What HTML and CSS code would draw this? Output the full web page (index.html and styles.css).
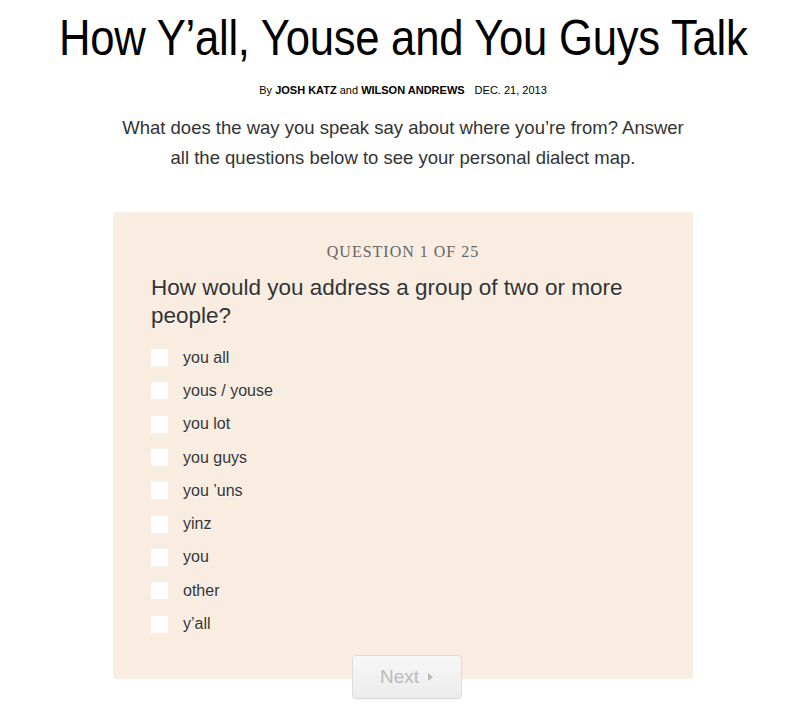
FILE: index.html
```html
<!DOCTYPE html>
<html>
<head>
<meta charset="utf-8">
<link rel="stylesheet" href="styles.css">
</head>
<body>
<header class="head">
  <h1 class="title"><span class="title-in">How Y’all, Youse and You Guys Talk</span></h1>
  <p class="byline">By <b>JOSH KATZ</b> and <b>WILSON ANDREWS</b><span class="date">DEC. 21, 2013</span></p>
  <p class="intro">What does the way you speak say about where you’re from? Answer all the questions below to see your personal dialect map.</p>
</header>
<main class="quiz">
  <div class="qnum">QUESTION 1 OF 25</div>
  <div class="qtext">How would you address a group of two or more people?</div>
  <ul class="opts">
    <li class="opt"><span class="box"></span><span class="lbl">you all</span></li>
    <li class="opt"><span class="box"></span><span class="lbl">yous / youse</span></li>
    <li class="opt"><span class="box"></span><span class="lbl">you lot</span></li>
    <li class="opt"><span class="box"></span><span class="lbl">you guys</span></li>
    <li class="opt"><span class="box"></span><span class="lbl">you ’uns</span></li>
    <li class="opt"><span class="box"></span><span class="lbl">yinz</span></li>
    <li class="opt"><span class="box"></span><span class="lbl">you</span></li>
    <li class="opt"><span class="box"></span><span class="lbl">other</span></li>
    <li class="opt"><span class="box"></span><span class="lbl">y’all</span></li>
  </ul>
</main>
<div class="nav">
  <button class="next">Next <svg width="7" height="10" viewBox="0 0 7 10"><path d="M1 1 L6 5 L1 9 Z" fill="#bbb"/></svg></button>
</div>
</body>
</html>
```
FILE: styles.css
```css
html, body { margin: 0; padding: 0; background: #fff; }
body { width: 806px; height: 712px; overflow: hidden; font-family: "Liberation Sans", Arial, sans-serif; color: #333; }
.head { text-align: center; }
.title {
  margin: 0; padding-top: 10px;
  font-family: "Liberation Sans", Arial, sans-serif;
  font-weight: normal; font-size: 50px; line-height: 56px; color: #000;
}
.title-in { display: inline-block; transform: scaleX(0.873); letter-spacing: -0.3px; }
.byline {
  margin: 17px 0 0; font-size: 11px; line-height: 14px; color: #000;
  font-family: "Liberation Sans", sans-serif;
}
.byline b { font-weight: bold; }
.date { margin-left: 10px; }
.intro {
  margin: 16px auto 0; width: 565px; font-size: 18.5px; line-height: 30px; color: #333;
  font-family: "Liberation Sans", Arial, sans-serif;
}
.quiz {
  margin: 39px auto 0; width: 580px; height: 467px; box-sizing: border-box;
  background: #f9ece0; border-radius: 3px; padding: 31px 38px 0;
}
.qnum {
  text-align: center; font-family: "Liberation Serif", serif; font-size: 16px; letter-spacing: 1px;
  color: #666; line-height: 18px;
}
.qtext { margin-top: 13px; font-size: 22.5px; line-height: 28px; color: #333; text-shadow: 0 1px 0 #fff; }
.opts { list-style: none; margin: 11px 0 0; padding: 0; }
.opt { display: flex; align-items: center; height: 33.3px; }
.box { width: 17px; height: 17px; background: #fff; margin-right: 15px; flex: none; }
.lbl { font-size: 16px; color: #333; text-shadow: 0 1px 0 #fff; }
.nav { display: flex; justify-content: center; margin-top: -24px; padding-left: 8px; }
.next {
  width: 110px; height: 44px; border: 1px solid #ddd; border-radius: 4px;
  background: linear-gradient(#f7f7f7, #ececec); color: #bbb;
  font-family: "Liberation Sans", Arial, sans-serif; font-size: 19px;
  display: flex; align-items: center; justify-content: center; gap: 8px; padding: 0;
  box-shadow: 0 1px 1px rgba(0,0,0,0.05);
}
```
